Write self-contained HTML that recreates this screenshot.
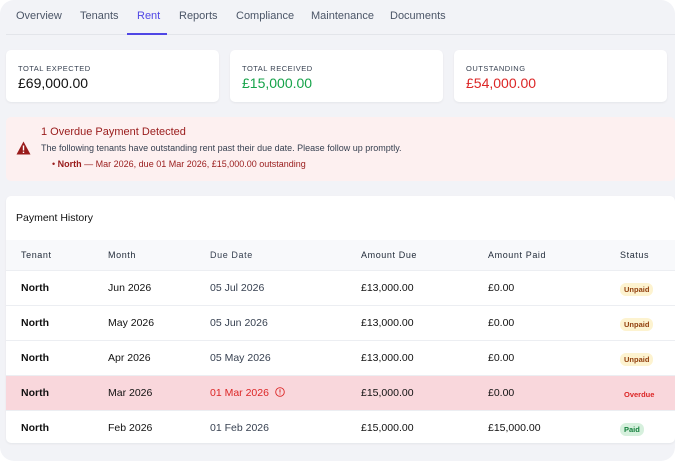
<!DOCTYPE html>
<html><head><style>
*{box-sizing:border-box;margin:0;padding:0}
html,body{width:675px;height:461px;background:#fff;overflow:hidden;font-family:"Liberation Sans",sans-serif}
.win{position:absolute;left:0;top:0;width:675px;height:461px;background:#f2f3f7;border-radius:14px;overflow:hidden}
.tabs{position:absolute;left:6px;top:0;right:0;height:35px;border-bottom:1px solid #e3e5ea}
.tab{position:absolute;top:10px;font-size:11px;color:#4b5567}
.tab.act{color:#4f46e5}
.ul{position:absolute;left:127px;top:33px;width:40px;height:2px;background:#4f46e5}
.card{position:absolute;top:50px;width:213px;height:52px;background:#fff;border-radius:5px;box-shadow:0 1px 2px rgba(0,0,0,.06)}
.card .l{position:absolute;left:12px;top:14px;font-size:7.5px;letter-spacing:.5px;color:#374151}
.card .v{position:absolute;left:12px;top:25px;font-size:14px;color:#111}
.alert{position:absolute;left:6px;top:117px;width:669px;height:64px;background:#fdf0f0;border-radius:5px}
.alert .t{position:absolute;left:35px;top:9px;font-size:11px;color:#991b1b}
.alert .d{position:absolute;left:35px;top:26px;font-size:9px;color:#374151}
.alert .b{position:absolute;left:46px;top:42px;font-size:9px;color:#991b1b}
.tbl{position:absolute;left:6px;top:196px;width:669px;height:247px;background:#fff;border-radius:5px;box-shadow:0 1px 2px rgba(0,0,0,.06)}
.tbl .h{position:absolute;left:10px;top:16px;font-size:10.5px;color:#111}
.row{position:absolute;left:0;width:669px;height:35px;border-top:1px solid #eceef2}
.row div{position:absolute;top:11px;font-size:10.5px;color:#111}
.c1,.c2{font-weight:bold}
.row .c1{font-weight:bold}
.hd{background:#f8f9fb;top:44px;height:30px;border-top:none}
.hd div{top:10px;font-size:9px;letter-spacing:.6px;color:#1f2937;font-weight:normal!important}
.c1{left:15px}.c2{left:102px}.c3{left:204px;color:#374151!important}.c4{left:355px}.c5{left:482px}.c6{left:614px}
.row .c2{font-weight:normal}
.pill{font-size:7.5px!important;padding:2px 4px;border-radius:6px;top:12px!important;font-weight:bold}
.up{background:#fdf3d0;color:#92400e!important}
.pd{background:#d6f0dd;color:#15803d!important}
</style></head><body><div class="win">
<div class="tabs">
<span class="tab" style="left:10px">Overview</span>
<span class="tab" style="left:74px">Tenants</span>
<span class="tab act" style="left:131px">Rent</span>
<span class="tab" style="left:173px">Reports</span>
<span class="tab" style="left:230px">Compliance</span>
<span class="tab" style="left:305px">Maintenance</span>
<span class="tab" style="left:384px">Documents</span>
</div>
<div class="ul"></div>
<div class="card" style="left:6px"><div class="l">TOTAL EXPECTED</div><div class="v">£69,000.00</div></div>
<div class="card" style="left:230px"><div class="l">TOTAL RECEIVED</div><div class="v" style="color:#16a34a">£15,000.00</div></div>
<div class="card" style="left:454px"><div class="l">OUTSTANDING</div><div class="v" style="color:#dc2626">£54,000.00</div></div>
<div class="alert">
<svg style="position:absolute;left:10px;top:24px" width="15" height="14" viewBox="0 0 15 14"><path d="M7.5 0.5L14.5 13.5H0.5Z" fill="#991b1b"/><rect x="6.8" y="4.5" width="1.4" height="5" fill="#fff"/><rect x="6.8" y="10.6" width="1.4" height="1.4" fill="#fff"/></svg>
<div class="t">1 Overdue Payment Detected</div>
<div class="d">The following tenants have outstanding rent past their due date. Please follow up promptly.</div>
<div class="b">• <b>North</b> — Mar 2026, due 01 Mar 2026, £15,000.00 outstanding</div>
</div>
<div class="tbl">
<div class="h">Payment History</div>
<div class="row hd"><div class="c1">Tenant</div><div class="c2">Month</div><div class="c3">Due Date</div><div class="c4">Amount Due</div><div class="c5">Amount Paid</div><div class="c6">Status</div></div>
<div class="row" style="top:74px"><div class="c1">North</div><div class="c2">Jun 2026</div><div class="c3">05 Jul 2026</div><div class="c4">£13,000.00</div><div class="c5">£0.00</div><div class="c6 pill up">Unpaid</div></div>
<div class="row" style="top:109px"><div class="c1">North</div><div class="c2">May 2026</div><div class="c3">05 Jun 2026</div><div class="c4">£13,000.00</div><div class="c5">£0.00</div><div class="c6 pill up">Unpaid</div></div>
<div class="row" style="top:144px"><div class="c1">North</div><div class="c2">Apr 2026</div><div class="c3">05 May 2026</div><div class="c4">£13,000.00</div><div class="c5">£0.00</div><div class="c6 pill up">Unpaid</div></div>
<div class="row" style="top:179px;background:#f9d7dc"><div class="c1">North</div><div class="c2">Mar 2026</div><div class="c3" style="color:#dc2626!important">01 Mar 2026 <svg width="10" height="10" viewBox="0 0 10 10" style="vertical-align:-1px;margin-left:3px"><circle cx="5" cy="5" r="4.3" fill="none" stroke="#dc2626" stroke-width=".9"/><rect x="4.5" y="2.3" width="1" height="3.3" fill="#dc2626"/><rect x="4.5" y="6.5" width="1" height="1" fill="#dc2626"/></svg></div><div class="c4">£15,000.00</div><div class="c5">£0.00</div><div class="c6 pill" style="color:#dc2626!important">Overdue</div></div>
<div class="row" style="top:214px"><div class="c1">North</div><div class="c2">Feb 2026</div><div class="c3">01 Feb 2026</div><div class="c4">£15,000.00</div><div class="c5">£15,000.00</div><div class="c6 pill pd">Paid</div></div>
</div>
</div></body></html>
